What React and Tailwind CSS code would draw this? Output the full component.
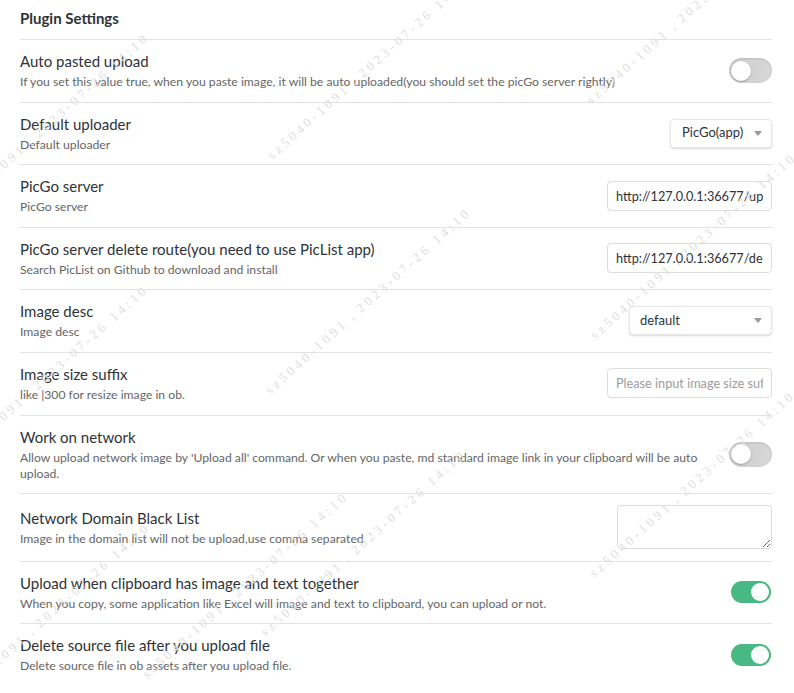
import React from "react";

// Plugin settings page (light theme) with the faint diagonal watermark on top.
const FONT = "font-['Segoe_UI',Lato,sans-serif]";

// start point (bottom-left of the text) of each watermark copy
const MARKS = [
  [-49, 223], [-50, 475], [-48, 713],
  [275, 163], [273, 398], [268, 640],
  [594, 108], [598, 343], [597, 581],
  [150, 682],
];

export default function App() {
  return (
    <div className={`relative min-h-[693px] overflow-hidden bg-white pl-[20px] pr-[22px] ${FONT}`}>
      <div className="pt-[8px] pb-[11px] text-[15px] font-bold leading-[20px] text-[#2e3338]">Plugin Settings</div>

      <Row title="Auto pasted upload"
        desc="If you set this value true, when you paste image, it will be auto uploaded(you should set the picGo server rightly)">
        <Toggle on={false} />
      </Row>
      <Row title="Default uploader" desc="Default uploader">
        <Select value="PicGo(app)" className="w-[102px] pl-[11px]" />
      </Row>
      <Row title="PicGo server" desc="PicGo server">
        <TextInput value="http://127.0.0.1:36677/upload" />
      </Row>
      <Row title="PicGo server delete route(you need to use PicList app)" desc="Search PicList on Github to download and install">
        <TextInput value="http://127.0.0.1:36677/delete" />
      </Row>
      <Row title="Image desc" desc="Image desc">
        <Select value="default" className="w-[143px] pl-[10px]" />
      </Row>
      <Row title="Image size suffix" desc="like |300 for resize image in ob.">
        <TextInput placeholder="Please input image size suffix" />
      </Row>
      <Row title="Work on network"
        desc={<>Allow upload network image by 'Upload all' command. Or when you paste, md standard image link in your clipboard will be auto<br />upload.</>}>
        <Toggle on={false} />
      </Row>
      <Row title="Network Domain Black List" desc="Image in the domain list will not be upload,use comma separated">
        <textarea readOnly className="block h-[44px] w-[155px] rounded-[4px] border border-[#dcdcdc] bg-white" />
      </Row>
      <Row title="Upload when clipboard has image and text together"
        desc="When you copy, some application like Excel will image and text to clipboard, you can upload or not.">
        <Toggle on />
      </Row>
      <Row title="Delete source file after you upload file" desc="Delete source file in ob assets after you upload file.">
        <Toggle on />
      </Row>

      <Watermark />
    </div>
  );
}

function Row({ title, desc, children }) {
  return (
    <div className="flex items-center border-t border-[#e3e3e3] pt-[11px] pb-[11.6px]">
      <div className="mr-4 flex-1">
        <div className="text-[15px] leading-[21px] text-[#2e3338]">{title}</div>
        <div className="mt-[2px] text-[12.2px] leading-[16px] text-[#666]">{desc}</div>
      </div>
      <div className="flex shrink-0 justify-end">{children}</div>
    </div>
  );
}

function Toggle({ on }) {
  if (on) {
    return (
      <div className="mr-[1px] flex h-[22px] w-[40px] items-center justify-end rounded-full bg-[#48b983] pr-[2px]">
        <div className="h-[18px] w-[18px] rounded-full bg-white" />
      </div>
    );
  }
  return (
    <div className="flex h-[25px] w-[43px] items-center rounded-full bg-gradient-to-r from-[#cfcfcf] to-[#d6d6d6] pl-[2px] shadow-[inset_0_1px_2px_rgba(0,0,0,0.12)]">
      <div className="h-[20px] w-[20px] rounded-full bg-white shadow-[0_1px_2px_rgba(0,0,0,0.25)]" />
    </div>
  );
}

function Select({ value, className }) {
  return (
    <div className={`flex h-[29px] items-center justify-between rounded-[4px] border border-[#e6e6e6] bg-white pr-[9px] text-[13px] text-[#2e3338] shadow-[0_1px_2px_rgba(0,0,0,0.15)] ${className}`}>
      <span>{value}</span>
      <svg width="8" height="5" viewBox="0 0 8 5"><path d="M0 0h8L4 5z" fill="#9a9a9a" /></svg>
    </div>
  );
}

function TextInput({ value, placeholder }) {
  return (
    <input readOnly value={value} placeholder={placeholder}
      className="block h-[30px] w-[165px] rounded-[4px] border border-[#dcdcdc] bg-white px-[8px] text-[12.7px] text-[#2e3338] placeholder:text-[#9c9c9c]" />
  );
}

function Watermark() {
  return (
    <div className="pointer-events-none absolute inset-0 overflow-hidden">
      {MARKS.map(([x, y]) => (
        <span key={`${x}-${y}`} style={{ left: x, top: y - 16 }}
          className="absolute origin-bottom-left -rotate-[42deg] whitespace-nowrap font-['Liberation_Serif',serif] text-[13px] leading-[16px] tracking-[3.5px] text-[#e0e0e0]">
          sz5040-1091，2023-07-26 14:10
        </span>
      ))}
    </div>
  );
}
